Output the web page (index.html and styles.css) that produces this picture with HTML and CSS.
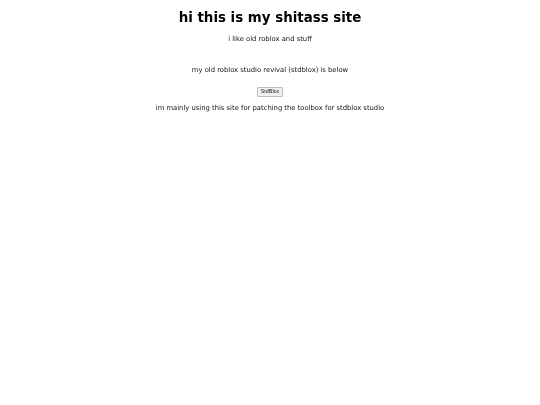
FILE: index.html
```html
<!DOCTYPE html>
<html lang="en">
<head>
<meta charset="utf-8">
<title>hi this is my shitass site</title>
<link rel="stylesheet" href="styles.css">
</head>
<body>
<h1 class="title">hi this is my shitass site</h1>
<p class="text">i like old roblox and stuff</p>
<p class="text below">my old roblox studio revival (stdblox) is below</p>
<div class="launch"><button class="btn" type="button">StdBlox</button></div>
<p class="text note">im mainly using this site for patching the toolbox for stdblox studio</p>
</body>
</html>
```
FILE: styles.css
```css
html, body {
  background: #ffffff;
}
body {
  margin: 3.33px;
  font-family: "DejaVu Sans", Verdana, sans-serif;
  color: #111111;
  text-align: center;
  filter: grayscale(1);
}
.title {
  font-size: 13.4px;
  font-weight: bold;
  margin: 6.6px 0 10.5px;
  line-height: normal;
  color: #000000;
}
.text {
  font-size: 6.8px;
  margin: 6.67px 0;
  line-height: normal;
}
.below {
  margin-top: 22.4px;
}
.launch {
  display: flex;
  justify-content: center;
  padding-top: 6.8px;
}
.note {
  margin-top: 7px;
}
.btn {
  height: 9.5px;
  box-sizing: border-box;
  padding: 0 2.5px;
  margin: 0;
  font-family: "Liberation Sans", Arial, sans-serif;
  font-size: 5.4px;
  line-height: 1;
  color: #222222;
  background: #efefef;
  border: 1px solid #bdbdbd;
  border-radius: 1px;
}
```
